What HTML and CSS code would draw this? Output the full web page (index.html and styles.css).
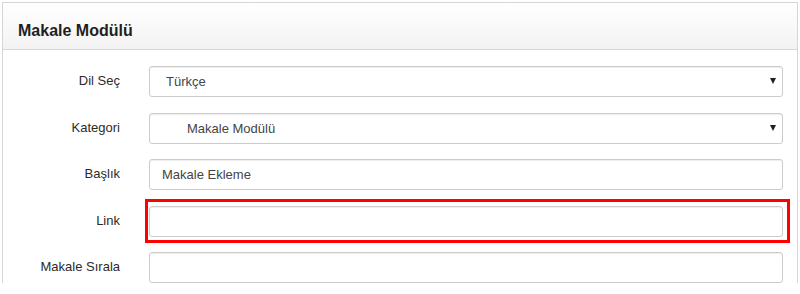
FILE: index.html
```html
<!DOCTYPE html>
<html lang="tr">
<head>
  <meta charset="UTF-8">
  <title>Makale Modülü</title>
  <link rel="stylesheet" href="styles.css">
</head>
<body>

  <div class="panel">
    <div class="panel-heading">
      <h3 class="panel-title">Makale Modülü</h3>
    </div>

    <form class="panel-body">
      <div class="form-row">
        <label class="control-label">Dil Seç</label>
        <div class="select-wrap">
          <select class="form-control select-lang">
            <option>Türkçe</option>
          </select>
        </div>
      </div>

      <div class="form-row">
        <label class="control-label">Kategori</label>
        <div class="select-wrap">
          <select class="form-control select-cat">
            <option>Makale Modülü</option>
          </select>
        </div>
      </div>

      <div class="form-row">
        <label class="control-label">Başlık</label>
        <input type="text" class="form-control" value="Makale Ekleme">
      </div>

      <div class="form-row">
        <label class="control-label">Link</label>
        <div class="highlight">
          <input type="text" class="form-control">
        </div>
      </div>

      <div class="form-row">
        <label class="control-label">Makale Sırala</label>
        <input type="text" class="form-control">
      </div>
    </form>
  </div>

</body>
</html>
```

FILE: styles.css
```css
  * {
    margin: 0;
    padding: 0;
    box-sizing: border-box;
    font-family: "Liberation Sans", Arial, sans-serif;
  }

  body {
    background-color: #fff;
    padding: 2px 2px 0 2px;
    color: #333;
  }

  .panel {
    border: 1px solid #d6d6d6;
    border-bottom: none;
    width: 796px;
  }

  .panel-heading {
    height: 47px;
    padding: 19px 0 0 15px;
    background: linear-gradient(to bottom, #fff 0%, #f3f3f3 100%);
    border-bottom: 1px solid #d6d6d6;
  }

  .panel-title {
    font-size: 16px;
    line-height: 18px;
    font-weight: bold;
    color: #1f1f1f;
  }

  .panel-body {
    padding: 16px 14px 0 0;
  }

  .form-row {
    display: grid;
    grid-template-columns: 117px 1fr;
    column-gap: 29px;
    align-items: center;
    margin-bottom: 15.5px;
  }

  .control-label {
    text-align: right;
    font-size: 13px;
    color: #2b2b2b;
    padding-bottom: 2px;
  }

  .form-control {
    display: block;
    width: 100%;
    height: 31px;
    padding: 0 12px;
    font-size: 13px;
    color: #444;
    background-color: #fff;
    border: 1px solid #ccc;
    border-radius: 3px;
    box-shadow: inset 0 1px 1px rgba(0, 0, 0, 0.075);
    outline: none;
  }

  select.form-control {
    appearance: none;
    -webkit-appearance: none;
  }

  .select-lang {
    padding-left: 16px; /* native select has a wider indent */
  }

  .select-cat {
    padding-left: 37px; /* alt kategori girintisi */
  }

  .select-wrap {
    position: relative;
  }

  .select-wrap::after {
    content: "";
    position: absolute;
    right: 7px;
    top: 12px;
    border-left: 3px solid transparent;
    border-right: 3px solid transparent;
    border-top: 6px solid #222;
    pointer-events: none;
  }

  .highlight {
    position: relative;
  }

  .highlight::after {
    content: "";
    position: absolute;
    left: -4px;
    right: -7px;
    top: -7px;
    bottom: -6px;
    border: 3px solid #f00;
    pointer-events: none;
  }
```
